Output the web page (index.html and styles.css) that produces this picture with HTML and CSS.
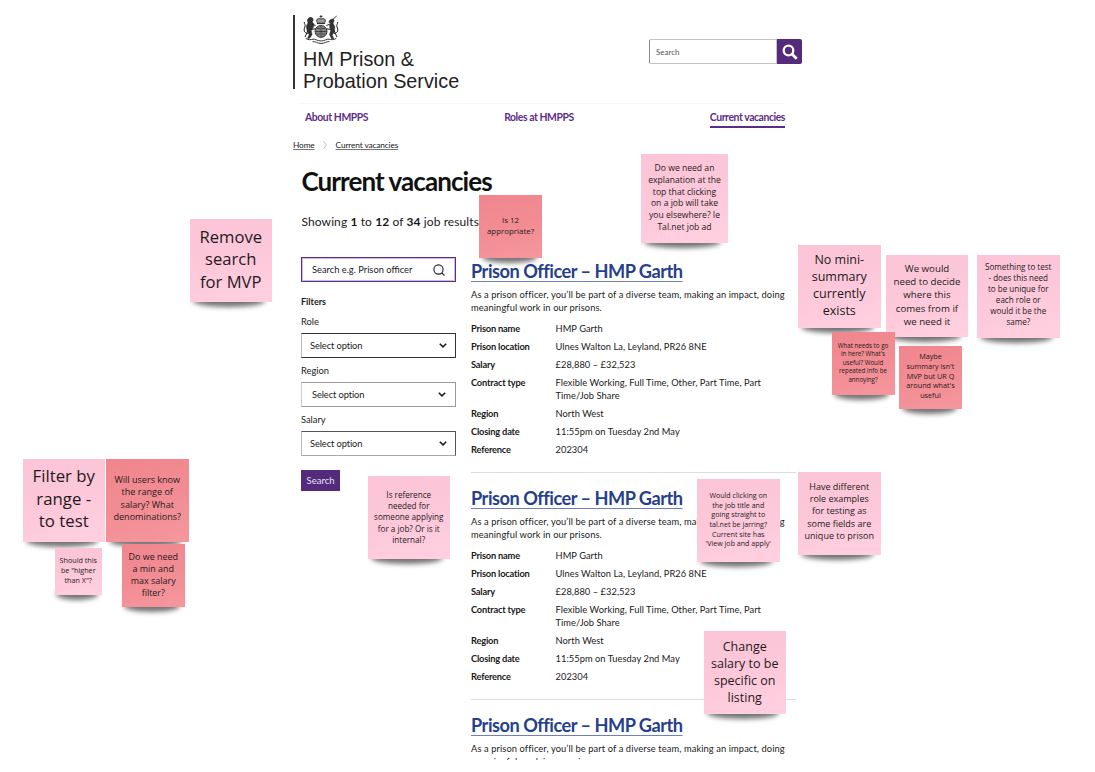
FILE: index.html
```
<!DOCTYPE html>
<html lang="en">
<head>
<meta charset="utf-8">
<title>Current vacancies – HM Prison &amp; Probation Service</title>
<link rel="stylesheet" href="styles.css">
</head>
<body>
<main class="board">
  <div class="site">
    <header class="header">
      <div class="logo">
        <svg class="crest" viewBox="0 0 36 30" width="36" height="30" fill="none" stroke="#222" stroke-linecap="round" stroke-linejoin="round">
          <path d="M18 .6v2M17 1.4h2" stroke-width=".9"/>
          <path d="M14.2 7.6c-2-3 .8-4.8 3.8-3.6 3-1.2 5.8.6 3.8 3.6z" fill="#999" stroke-width=".8"/>
          <path d="M14.4 8.6h7.2" stroke-width="1"/>
          <circle cx="18" cy="16.4" r="5.900" fill="#888" stroke-width="1" stroke-dasharray="1.4 .6"/>
          <path d="M18 11.5v10M13 16.5h10M14.5 13.5h2M19.5 13.5h2M14.5 19h2M19.5 19h2" stroke-width=".7"/>
          <path d="M6.2 2.8c2-1.200 4.300.2 4 2.500l-1 1.700c2 1 2 3 1.300 5l-2.200 3.400.8 4.400-2.400 3.500-2.300.2 1.700-3.700-1.800-3.200-1.100-5.400 1.800-3.400c-1.200-2-.6-4.200 1.200-5z" fill="#333" stroke-width=".4"/>
          <path d="M9 9l3.300 1.500M8.500 14.500l3.500-.7M4.400 18.500C1 18 .4 14.500 1.900 12c1-2-.9-3-.7-4.600M4.800 16l-2.600 5.700" stroke-width="1"/>
          <path d="M33.400 1.200l-3 3.100c-2.200-.8-4.200.7-4.600 3l1.700.7-1.100 3.500 1.300 4-1.200 4 2 4.200 2.400.2-1.700-3.900 2.300-3 .3-5.400-1.700-3.400 1.100-2.600-1-1.600z" fill="#333" stroke-width=".4"/>
          <path d="M27 9l-3.300 1.500M27.500 14.500l-3.500-.7M31.500 18.500c3.500-.5 4-4 2.500-6.500-1-2 .9-3 .7-4.600M31.300 16l2.500 5.700" stroke-width="1"/>
          <path d="M3 23.500c2 1.800 5 1.200 7 .7 2.500-.5 4 1.800 8 1.800s5.500-2.300 8-1.800c2 .5 5 1.100 7-.7M10 26.500c2.500-.2 4.500 2 8 2s5.500-2.200 8-2" stroke-width=".9"/>
        </svg>
        <div class="logo-text">HM Prison &amp;<br>Probation Service</div>
      </div>
      <div class="site-search">
        <span class="site-search-field">Search</span>
        <span class="site-search-button">
          <svg viewBox="0 0 16 16" width="16" height="16" fill="none" stroke="#fff" stroke-width="2.300"><circle cx="6.500" cy="6.500" r="4.800"/><path d="M10 10l4.700 4.700" stroke-width="2.800"/></svg>
        </span>
      </div>
    </header>
    <nav class="nav">
      <a class="nav-link">About HMPPS</a>
      <a class="nav-link">Roles at HMPPS</a>
      <a class="nav-link current">Current vacancies</a>
    </nav>
    <div class="crumbs">
      <a>Home</a>
      <svg viewBox="0 0 4 8" width="4" height="8" fill="none" stroke="#aaa" stroke-width=".8"><path d="M.5.5L3.500 4 .5 7.500"/></svg>
      <a>Current vacancies</a>
    </div>
    <h1 class="title">Current vacancies</h1>
    <p class="count">Showing <b>1</b> to <b>12</b> of <b>34</b> job results</p>
    <div class="columns">
      <aside class="filters">
        <div class="keyword">
          <span>Search e.g. Prison officer</span>
          <svg viewBox="0 0 12 12" width="12" height="12" fill="none" stroke="#222" stroke-width="1.100"><circle cx="5.500" cy="5.500" r="4.600"/><path d="M8.800 8.800L11.500 11.500"/></svg>
        </div>
        <h2 class="filters-title">Filters</h2>
        <div class="label">Role</div>
        <div class="select"><span>Select option</span><svg viewBox="0 0 8 5" width="8" height="5" fill="none" stroke="#222" stroke-width="1.600"><path d="M.8.700L4 3.900 7.200.700"/></svg></div>
        <div class="label">Region</div>
        <div class="select soft"><span>Select option</span><svg viewBox="0 0 8 5" width="8" height="5" fill="none" stroke="#222" stroke-width="1.600"><path d="M.8.700L4 3.900 7.200.700"/></svg></div>
        <div class="label">Salary</div>
        <div class="select last"><span>Select option</span><svg viewBox="0 0 8 5" width="8" height="5" fill="none" stroke="#222" stroke-width="1.600"><path d="M.8.700L4 3.900 7.200.700"/></svg></div>
        <div class="submit">Search</div>
      </aside>
      <section class="jobs">
        <article class="job">
          <h3 class="job-title"><a>Prison Officer – HMP Garth</a></h3>
          <p class="summary">As a prison officer, you’ll be part of a diverse team, making an impact, doing<br>meaningful work in our prisons.</p>
          <dl class="facts">
            <dt>Prison name</dt><dd>HMP Garth</dd>
            <dt>Prison location</dt><dd>Ulnes Walton La, Leyland, PR26 8NE</dd>
            <dt>Salary</dt><dd>£28,880 – £32,523</dd>
            <dt>Contract type</dt><dd>Flexible Working, Full Time, Other, Part Time, Part<br>Time/Job Share</dd>
            <dt>Region</dt><dd>North West</dd>
            <dt>Closing date</dt><dd>11:55pm on Tuesday 2nd May</dd>
            <dt>Reference</dt><dd>202304</dd>
          </dl>
        </article>
        <article class="job">
          <h3 class="job-title"><a>Prison Officer – HMP Garth</a></h3>
          <p class="summary">As a prison officer, you’ll be part of a diverse team, making an impact, doing<br>meaningful work in our prisons.</p>
          <dl class="facts">
            <dt>Prison name</dt><dd>HMP Garth</dd>
            <dt>Prison location</dt><dd>Ulnes Walton La, Leyland, PR26 8NE</dd>
            <dt>Salary</dt><dd>£28,880 – £32,523</dd>
            <dt>Contract type</dt><dd>Flexible Working, Full Time, Other, Part Time, Part<br>Time/Job Share</dd>
            <dt>Region</dt><dd>North West</dd>
            <dt>Closing date</dt><dd>11:55pm on Tuesday 2nd May</dd>
            <dt>Reference</dt><dd>202304</dd>
          </dl>
        </article>
        <article class="job">
          <h3 class="job-title"><a>Prison Officer – HMP Garth</a></h3>
          <p class="summary">As a prison officer, you’ll be part of a diverse team, making an impact, doing<br>meaningful work in our prisons.</p>
        </article>
      </section>
    </div>
  </div>

  <div class="note n-remove">Remove<br>search<br>for MVP</div>
  <div class="note red n-twelve">Is 12<br>appropriate?</div>
  <div class="note n-explain">Do we need an<br>explanation at the<br>top that clicking<br>on a job will take<br>you elsewhere? Ie<br>Tal.net job ad</div>
  <div class="note n-mini">No mini-<br>summary<br>currently<br>exists</div>
  <div class="note n-decide">We would<br>need to decide<br>where this<br>comes from if<br>we need it</div>
  <div class="note n-unique">Something to test<br>- does this need<br>to be unique for<br>each role or<br>would it be the<br>same?</div>
  <div class="note red n-useful">What needs to go<br>in here? What's<br>useful? Would<br>repeated info be<br>annoying?</div>
  <div class="note red n-maybe">Maybe<br>summary isn't<br>MVP but UR Q<br>around what's<br>useful</div>
  <div class="note n-range">Filter by<br>range -<br>to test</div>
  <div class="note red n-denom">Will users know<br>the range of<br>salary? What<br>denominations?</div>
  <div class="note n-higher">Should this<br>be "higher<br>than X"?</div>
  <div class="note red n-minmax">Do we need<br>a min and<br>max salary<br>filter?</div>
  <div class="note n-reference">Is reference<br>needed for<br>someone applying<br>for a job? Or is it<br>internal?</div>
  <div class="note n-jarring">Would clicking on<br>the job title and<br>going straight to<br>tal.net be jarring?<br>Current site has<br>'View job and apply'</div>
  <div class="note n-examples">Have different<br>role examples<br>for testing as<br>some fields are<br>unique to prison</div>
  <div class="note n-salary">Change<br>salary to be<br>specific on<br>listing</div>
</main>
</body>
</html>
```
FILE: styles.css
```
* { box-sizing: border-box; }
body { margin: 0; background: #fff; }
h1, h2, h3, p, dl, dd { margin: 0; }
svg { display: block; flex: none; }

.board {
  position: relative;
  width: 1095px;
  height: 760px;
  overflow: hidden;
}

.site {
  width: 509px;
  margin-left: 293px;
  padding-top: 15px;
  font-family: Lato, "Noto Sans", sans-serif;
  font-size: 9.300px;
  color: #1a1a1a;
  white-space: nowrap;
}

.header {
  display: flex;
  justify-content: space-between;
  height: 88px;
}
.logo {
  height: 74px;
  padding-left: 8px;
  border-left: 2px solid #333;
}
.logo-text {
  margin-top: 4px;
  font: 19.800px/21.500px "Liberation Sans", Arial, sans-serif;
  color: #222;
}
.site-search {
  display: flex;
  width: 153px;
  height: 25px;
  margin-top: 24px;
}
.site-search-field {
  flex: 1;
  padding-left: 6px;
  border: 1px solid #c4c4c4;
  border-left-color: #888;
  border-radius: 2px 0 0 2px;
  font-size: 8px;
  line-height: 24px;
  color: #555;
}
.site-search-button {
  display: grid;
  place-items: center;
  width: 25px;
  background: #532a7c;
  border-radius: 0 2px 2px 0;
}

.nav {
  display: flex;
  justify-content: space-between;
  margin: 0 17px 0 7px;
  padding: 6px 0 0 5px;
  height: 33px;
  border-top: 1px solid #f7f7f7;
}
.nav-link {
  height: 17px;
  font-size: 10.400px;
  font-weight: 700;
  letter-spacing: -.42px;
  line-height: 14px;
  color: #5b2d87;
}
.nav-link.current { height: 18px; border-bottom: 2px solid #5b2d87; }

.crumbs {
  display: flex;
  align-items: center;
  height: 18px;
  font-size: 8.300px;
  letter-spacing: -.13px;
  gap: 8.500px;
}
.crumbs a { text-decoration: underline; text-decoration-color: #777; text-underline-offset: 1px; text-decoration-thickness: 1px; }

.title {
  margin: 10px 0 0 8.500px;
  font-size: 26px;
  letter-spacing: -.92px;
  line-height: 34px;
  color: #111;
}
.count {
  margin: 15.500px 0 0 8.500px;
  font-size: 12px;
  letter-spacing: .1px;
  line-height: 16px;
}

.columns {
  display: grid;
  grid-template-columns: 155px 325px;
  column-gap: 15px;
  padding-left: 8px;
  margin-top: 16.500px;
}

.filters { padding-top: 11px; }
.keyword {
  display: flex;
  align-items: center;
  justify-content: space-between;
  height: 25px;
  padding: 0 10px 0 10px;
  border: 1px solid #5b2d87;
  box-shadow: inset 0 0 0 1px #cdbfdc;
}
.filters-title {
  margin-top: 13px;
  font-size: 9px;
  line-height: 14px;
}
.label {
  margin-top: 6px;
  line-height: 14px;
}
.label + .select { margin-top: 4px; }
.select {
  display: flex;
  align-items: center;
  justify-content: space-between;
  height: 25px;
  padding: 0 8px;
  border: 1px solid #333;
  border-left-color: #bbb;
  letter-spacing: -.1px;
}
.select.soft { border-color: #999 #999 #999 #ccc; padding: 0 9px 0 10px; }
.select.last { border-color: #555 #555 #aaa #bbb; }
.submit {
  width: 39px;
  height: 21px;
  margin-top: 14px;
  background: #532a7c;
  color: #e9e0f2;
  font-size: 9.500px;
  line-height: 21px;
  text-align: center;
}

.job {
  height: 227px;
  padding-top: 13px;
  border-bottom: 1px solid #ddd;
}
.job-title {
  font-size: 18.200px;
  letter-spacing: -.5px;
  line-height: 25px;
  color: #263f8c;
}
.job-title a {
  text-decoration: underline;
  text-decoration-color: #6f82b8;
  text-decoration-thickness: 1px;
  text-decoration-skip-ink: none;
  text-underline-offset: 2.500px;
}
.summary {
  margin-top: 5px;
  letter-spacing: .1px;
  line-height: 12.500px;
}
.facts {
  display: grid;
  grid-template-columns: 84.500px 1fr;
  row-gap: 5px;
  margin-top: 8px;
  letter-spacing: .05px;
  line-height: 13px;
}
.facts dt { font-weight: 700; letter-spacing: -.2px; }

/* Sticky notes pinned over the page */
.note {
  position: absolute;
  isolation: isolate;
  display: flex;
  align-items: center;
  justify-content: center;
  width: 82.500px;
  height: 83px;
  font-family: "Open Sans", "Noto Sans", sans-serif;
  line-height: 1.362;
  text-align: center;
  white-space: nowrap;
  color: #1f1a1c;
}
.note::before {
  content: "";
  position: absolute;
  z-index: -2;
  left: 4%;
  right: 8%;
  bottom: -5px;
  height: 12px;
  border-radius: 50%;
  background: rgba(0, 0, 0, .55);
  filter: blur(2.500px);
}
.note::after {
  content: "";
  position: absolute;
  z-index: -1;
  inset: 0;
  background: linear-gradient(165deg, #fbc4d7 0%, #fdc8da 50%, #ffd0e0 100%);
}
.note.red::after { background: linear-gradient(165deg, #f0868d 0%, #f28c93 50%, #f5979d 100%); }

.n-remove { left: 189.500px; top: 218.500px; padding-bottom: 1px; font-size: 16.600px; }
.n-twelve { left: 479px; top: 195px; width: 63px; height: 63px; padding-bottom: 2px; font-size: 7.900px; }
.n-explain { left: 641px; top: 154px; width: 87px; height: 88.500px; font-size: 8.600px; }
.n-mini { left: 798px; top: 244.500px; padding-bottom: 2px; font-size: 12.500px; }
.n-decide { left: 886px; top: 254.500px; width: 82px; height: 82px; padding-bottom: 1px; font-size: 9.700px; }
.n-unique { left: 977px; top: 255px; padding-bottom: 3px; font-size: 8.050px; }
.n-useful { left: 831.500px; top: 332px; width: 63px; height: 63px; padding-bottom: 1px; font-size: 6.200px; }
.n-maybe { left: 899px; top: 345.500px; width: 63px; height: 63px; padding-bottom: 1px; font-size: 7.250px; }
.n-range { left: 22.500px; top: 458.500px; padding-bottom: 2px; font-size: 16.800px; }
.n-denom { left: 106px; top: 458.500px; padding-bottom: 3px; font-size: 9.050px; }
.n-higher { left: 54.500px; top: 547.500px; width: 47.500px; height: 47.500px; padding-bottom: 1px; font-size: 7.200px; }
.n-minmax { left: 121.500px; top: 544px; width: 63.500px; height: 63px; padding-bottom: 1px; font-size: 8.950px; }
.n-reference { left: 367.500px; top: 476px; padding-bottom: 1px; font-size: 8.150px; }
.n-jarring { left: 697px; top: 479px; padding-bottom: 1px; font-size: 7.100px; }
.n-examples { left: 798px; top: 471.500px; padding-bottom: 3px; font-size: 9px; }
.n-salary { left: 703.500px; top: 630.500px; font-size: 12.500px; }
```
